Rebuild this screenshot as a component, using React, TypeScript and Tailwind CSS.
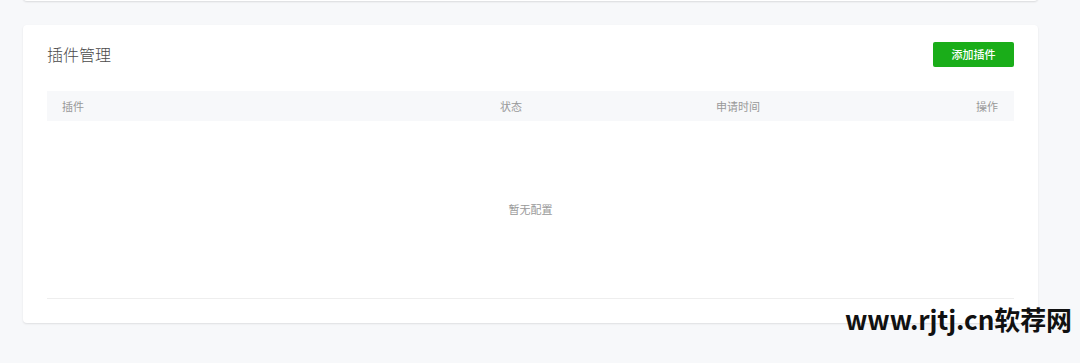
export default function App() {
  const font = { fontFamily: '"Noto Sans CJK SC", "Noto Sans", sans-serif' }
  return (
    <div className="relative w-[1080px] h-[363px] bg-[#f7f8fa] overflow-hidden" style={font}>
      <div className="pl-[23px] pr-[42px] -mt-[20px]">
        <div className="h-[21px] bg-white rounded-b-[4px] shadow-[0_1px_2px_rgba(0,0,0,0.12)]" />

        <div className="mt-[24px] bg-white rounded-[4px] shadow-[0_1px_2px_rgba(0,0,0,0.1)] px-[24px] pt-[17px] pb-[24px]">
          <div className="flex items-center justify-between h-[25px]">
            <h1 className="text-[16px] leading-[25px] text-[#4a4a4a] font-light">插件管理</h1>
            <button className="w-[81px] h-[25px] rounded-[2px] bg-[#1aad19] text-white text-[11px] font-medium">
              添加插件
            </button>
          </div>

          <div className="mt-[24px]">
            <div className="grid grid-cols-[438px_216px_1fr_120px] h-[30px] items-center bg-[#f7f8fa] text-[11px] text-[#999]">
              <div className="pl-[15px]">插件</div>
              <div className="pl-[15px]">状态</div>
              <div className="pl-[15px]">申请时间</div>
              <div className="pr-[16px] text-right">操作</div>
            </div>
            <div className="h-[178px] flex items-center justify-center border-b border-[#eeeeee] text-[11px] text-[#999]">
              暂无配置
            </div>
          </div>
        </div>
      </div>

      <div className="absolute left-[845px] top-[301px] text-[26px] font-bold leading-[36px] text-[#111] tracking-[-0.1px]">
        www.rjtj.cn软荐网
      </div>
    </div>
  )
}
